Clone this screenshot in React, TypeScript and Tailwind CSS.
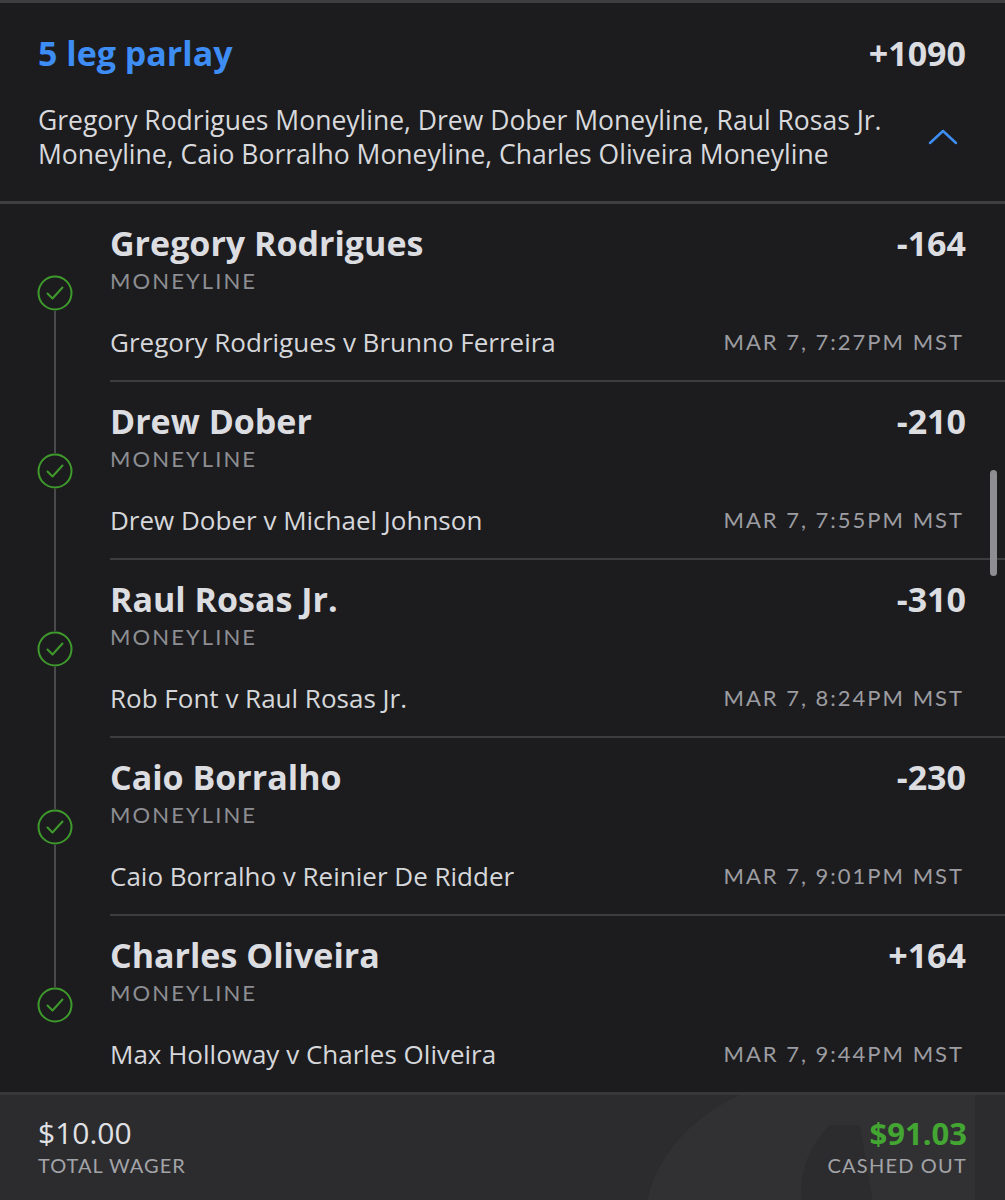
import React from "react";

const legs = [
  { name: "Gregory Rodrigues", odds: "-164", matchup: "Gregory Rodrigues v Brunno Ferreira", time: "MAR 7, 7:27PM MST" },
  { name: "Drew Dober", odds: "-210", matchup: "Drew Dober v Michael Johnson", time: "MAR 7, 7:55PM MST" },
  { name: "Raul Rosas Jr.", odds: "-310", matchup: "Rob Font v Raul Rosas Jr.", time: "MAR 7, 8:24PM MST" },
  { name: "Caio Borralho", odds: "-230", matchup: "Caio Borralho v Reinier De Ridder", time: "MAR 7, 9:01PM MST" },
  { name: "Charles Oliveira", odds: "+164", matchup: "Max Holloway v Charles Oliveira", time: "MAR 7, 9:44PM MST" },
];

const sans = { fontFamily: "'Open Sans', Lato, sans-serif" };
const label = { fontFamily: "Lato, 'Open Sans', sans-serif" };

function Check() {
  return (
    <svg width="36" height="36" viewBox="0 0 36 36" className="shrink-0">
      <circle cx="18" cy="18" r="16.5" fill="none" stroke="#3f9a2c" strokeWidth="2" />
      <polyline points="10.5,18.5 15.5,23.5 25.5,12.5" fill="none" stroke="#3f9a2c" strokeWidth="2" strokeLinecap="round" strokeLinejoin="round" />
    </svg>
  );
}

function Leg({ leg, first, last }: { leg: (typeof legs)[0]; first: boolean; last: boolean }) {
  return (
    <div className="flex">
      <div className="w-[110px] shrink-0 flex flex-col items-center">
        <div className={`w-[2px] h-[71px] ${first ? "" : "bg-[#4a4a4d]"}`} />
        <Check />
        <div className={`w-[2px] flex-1 ${last ? "" : "bg-[#4a4a4d]"}`} />
      </div>
      <div className={`flex-1 pt-[20px] pb-[23px] pr-[39px] ${last ? "" : "border-b-2 border-[#3d3d40]"}`}>
        <div className="flex justify-between items-center">
          <span style={sans} className="text-[34px] leading-[38px] font-bold text-[#dcdde1]">{leg.name}</span>
          <span style={sans} className="text-[34px] leading-[38px] font-bold text-[#dcdde1]">{leg.odds}</span>
        </div>
        <div style={label} className="mt-[6px] text-[22px] leading-[26px] tracking-[2.1px] text-[#8d8e93]">MONEYLINE</div>
        <div className="mt-[33px] flex justify-between items-center">
          <span style={sans} className="text-[26px] leading-[30px] text-[#d6d7db]">{leg.matchup}</span>
          <span style={label} className="text-[22px] leading-[30px] tracking-[2px] text-[#9c9da2] mr-[2px]">{leg.time}</span>
        </div>
      </div>
    </div>
  );
}

export default function App() {
  return (
    <div className="w-[1005px] h-[1200px] bg-[#1c1c1e] relative overflow-hidden flex flex-col" style={sans}>
      <div className="h-[3px] bg-[#3e3e41]" />
      <div className="pl-[38px] pr-[39px] pt-[30px] pb-[30px] border-b-[3px] border-[#3e3e41]">
        <div className="flex justify-between items-center">
          <span className="text-[34px] leading-[40px] font-bold text-[#3d8df5]">5 leg parlay</span>
          <span className="text-[34px] leading-[40px] font-bold text-[#dcdde1]">+1090</span>
        </div>
        <div className="mt-[30px] flex items-center justify-between">
          <p className="text-[26.5px] leading-[34px] text-[#d8d9dd] w-[870px]">
            Gregory Rodrigues Moneyline, Drew Dober Moneyline, Raul Rosas Jr. Moneyline, Caio Borralho Moneyline, Charles Oliveira Moneyline
          </p>
          <svg width="30" height="18" viewBox="0 0 30 18" className="mr-[8px]">
            <polyline points="2,15 15,3 28,15" fill="none" stroke="#3d8df5" strokeWidth="2.5" strokeLinecap="round" strokeLinejoin="round" />
          </svg>
        </div>
      </div>
      <div className="flex flex-col">
        {legs.map((leg, i) => (
          <Leg key={leg.name} leg={leg} first={i === 0} last={i === legs.length - 1} />
        ))}
      </div>
      <div className="flex-1 bg-[#2c2c2f] border-t-[3px] border-[#38383b] relative overflow-hidden">
        <svg className="absolute right-[20px] top-0" width="340" height="120" viewBox="0 0 340 120">
          <path d="M95 0 L330 0 L330 120 L230 120 L215 30 L185 30 C160 55 150 90 160 120 L0 120 C5 70 40 25 95 0 Z" fill="#313134" />
        </svg>
        <div className="relative flex justify-between pl-[38px] pr-[38px] pt-[21px]">
          <div>
            <div className="text-[30px] leading-[34px] text-[#e0e1e4]">$10.00</div>
            <div style={label} className="mt-[2px] text-[20px] leading-[26px] tracking-[1px] text-[#a3a4a8]">TOTAL WAGER</div>
          </div>
          <div className="text-right">
            <div className="text-[31px] leading-[34px] font-bold text-[#44a632]">$91.03</div>
            <div style={label} className="mt-[2px] text-[20px] leading-[26px] tracking-[1.2px] text-[#a3a4a8]">CASHED OUT</div>
          </div>
        </div>
      </div>
      <div className="absolute left-[990px] top-[470px] w-[7px] h-[106px] rounded-full bg-[#8e8e92]" />
    </div>
  );
}
